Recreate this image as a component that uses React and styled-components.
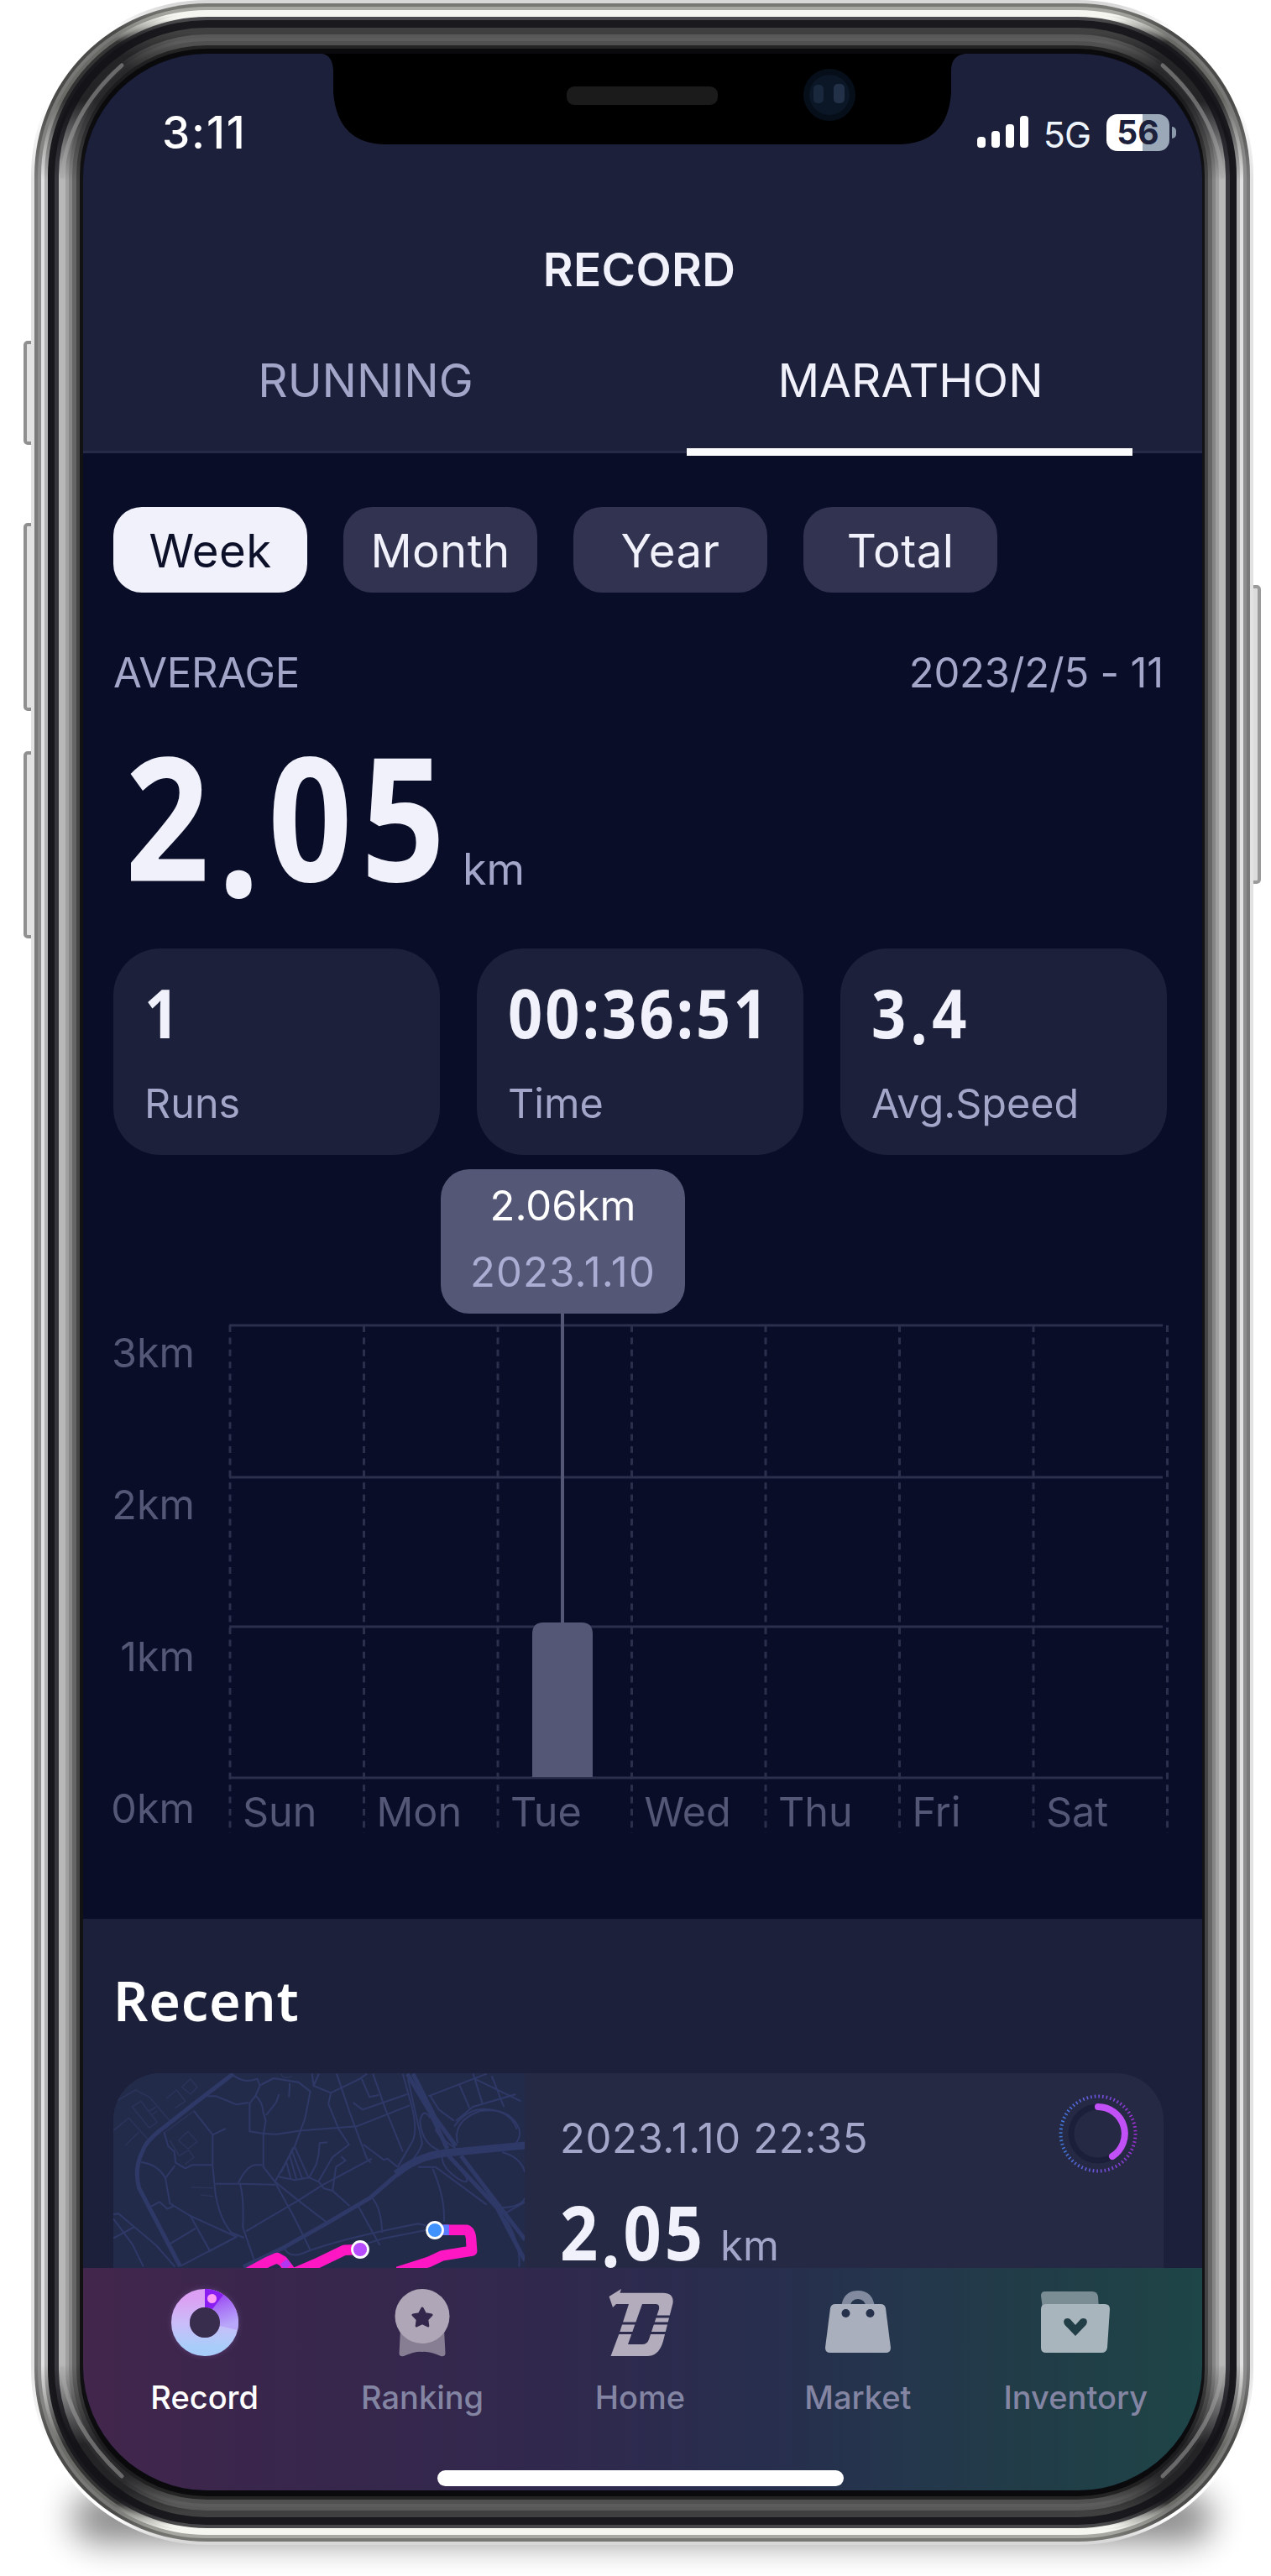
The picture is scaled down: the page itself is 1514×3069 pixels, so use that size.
import React from 'react';
import styled, { createGlobalStyle } from 'styled-components';

const GlobalStyle = createGlobalStyle`
    * { box-sizing: border-box; }
    body {
        margin: 0;
        background: #ffffff;
        font-family: Inter, 'Liberation Sans', sans-serif;
    }
`

const colors = {
    page: '#090d27',
    panel: '#1c203a',
    card: '#262944',
    chip: '#313350',
    light: '#f0f1fb',
    muted: '#a3a6c8',
    dim: '#555777',
    grid: '#2c2f4c',
}

const Stage = styled.div`
    position: relative;
    width: 1514px;
    height: 3069px;
    padding: 64px 0 0 99px;
    overflow: hidden;
`

const FrameSvg = styled.svg`
    position: absolute;
    top: 0;
    left: 0;
`

const Screen = styled.main`
    position: relative;
    display: flex;
    flex-direction: column;
    width: 1333px;
    height: 2903px;
    border-radius: 148px;
    overflow: hidden;
    background: ${colors.page};
`

const NotchSvg = styled.svg`
    position: absolute;
    top: 0;
    left: 285px;
`

/* ---------- header ---------- */

const Header = styled.header`
    height: 476px;
    flex: none;
    background: ${colors.panel};
    border-bottom: 3px solid #262a46;
`

const StatusBar = styled.div`
    display: flex;
    align-items: center;
    justify-content: space-between;
    height: 188px;
    padding: 0 31px 0 94px;
`

const Clock = styled.span`
    font-size: 53px;
    font-weight: 500;
    letter-spacing: 1.8px;
    color: #fff;
`

const StatusIcons = styled.div`
    display: flex;
    align-items: center;
    gap: 19px;
`

const Network = styled.span`
    font-size: 43px;
    line-height: 50px;
    letter-spacing: -1px;
    color: #eef4fb;
    margin: 3px 0 0 -2px;
`

const BatteryWrap = styled.div`
    display: flex;
    align-items: center;
    gap: 3px;
`

const Battery = styled.div`
    width: 75px;
    height: 44px;
    border-radius: 13px;
    background: linear-gradient(to right, #fff 57%, #9aa8b8 57%);
    color: ${colors.panel};
    font-size: 39px;
    font-weight: 700;
    line-height: 44px;
    text-align: center;
`

const BatteryTip = styled.i`
    width: 5px;
    height: 14px;
    border-radius: 0 5px 5px 0;
    background: #8b9aab;
`

const Title = styled.h1`
    margin: 0;
    padding-right: 8px;
    font-size: 55px;
    font-weight: 600;
    line-height: 138px;
    letter-spacing: 0.3px;
    text-align: center;
    color: ${colors.light};
`

const Tabs = styled.nav`
    display: flex;
    padding: 0 23px 0 12px;
`

const Tab = styled.a`
    position: relative;
    flex: 1;
    height: 147px;
    line-height: 126px;
    font-size: 55px;
    text-align: center;
    color: ${props => props.$active ? colors.light : colors.muted};
    &::after {
        content: '';
        display: ${props => props.$active ? 'block' : 'none'};
        position: absolute;
        left: 58px;
        bottom: -6px;
        width: 531px;
        height: 9px;
        background: #fafaff;
    }
`

/* ---------- dashboard ---------- */

const Dashboard = styled.section`
    height: 1746px;
    flex: none;
    padding: 64px 42px 0 36px;
`

const Chips = styled.div`
    display: flex;
    gap: 43px;
`

const Chip = styled.button`
    width: 231px;
    height: 102px;
    padding: 2px 0 0;
    border: 0;
    border-radius: 34px;
    font-family: inherit;
    font-size: 54.5px;
    line-height: 100px;
    letter-spacing: 0.4px;
    background: ${props => props.$active ? colors.light : colors.chip};
    color: ${props => props.$active ? '#0d1029' : colors.light};
`

const Range = styled.div`
    display: flex;
    justify-content: space-between;
    margin-top: 66px;
    padding-right: 4px;
    font-size: 49px;
    line-height: 60px;
    letter-spacing: -0.2px;
    color: ${colors.muted};
`

const Distance = styled.div`
    display: flex;
    align-items: flex-end;
    margin-top: 39px;
    padding-left: 14px;
`

/* condensed numerals; width is the room they take once squeezed */
const Num = styled.strong`
    display: block;
    width: ${props => props.$width ? props.$width + 'px' : 'auto'};
    font-family: 'Noto Sans', sans-serif;
    font-size: ${props => props.$size}px;
    font-weight: 700;
    line-height: ${props => props.$line}px;
    letter-spacing: ${props => props.$track || 0}px;
    white-space: nowrap;
    color: ${colors.light};
    transform: scaleX(${props => props.$squeeze || 0.9});
    transform-origin: 0 50%;
`

/* the decimal point hangs under the baseline */
const Dot = styled.span`
    line-height: 0;
    vertical-align: -0.09em;
`

const Unit = styled.span`
    font-size: ${props => props.$size}px;
    line-height: 60px;
    padding-bottom: ${props => props.$lift || 0}px;
    color: ${colors.muted};
`

const Stats = styled.div`
    display: grid;
    grid-template-columns: repeat(3, 1fr);
    gap: 44px;
    margin-top: 59px;
`

const Stat = styled.div`
    display: flex;
    flex-direction: column;
    height: 246px;
    padding: 34px 0 0 37px;
    border-radius: 56px;
    background: ${colors.panel};
    white-space: nowrap;
`

const StatLabel = styled.span`
    margin-top: 37px;
    font-size: 48.5px;
    line-height: 60px;
    color: ${colors.muted};
`

const ChartBox = styled.div`
    position: relative;
    height: 850px;
`

const ChartSvg = styled.svg`
    display: block;
    overflow: visible;
    text {
        font-size: 48.5px;
        fill: ${colors.dim};
    }
`

const Tooltip = styled.div`
    position: absolute;
    top: 17px;
    left: 390px;
    width: 291px;
    height: 172px;
    padding-top: 14px;
    border-radius: 34px;
    background: ${colors.dim};
    color: #fff;
    font-size: 49px;
    line-height: 60px;
    text-align: center;
    span {
        display: block;
        margin-top: 19px;
        letter-spacing: 1.2px;
        color: #abadd3;
    }
`

/* ---------- recent ---------- */

/* the card runs on underneath the tab bar */
const Recent = styled.section`
    height: 416px;
    flex: none;
    padding: 57px 46px 0 36px;
    background: ${colors.panel};
`

const Heading = styled.h2`
    margin: 0 0 47px;
    font-family: 'Noto Sans', sans-serif;
    font-size: 64.5px;
    font-weight: 600;
    line-height: 80px;
    letter-spacing: 0.8px;
    color: #fff;
`

const RunCard = styled.article`
    display: flex;
    height: 400px;
    border-radius: 56px;
    background: ${colors.card};
`

const MapSvg = styled.svg`
    flex: none;
    border-radius: 56px 0 0 56px;
`

const RunInfo = styled.div`
    flex: 1;
    padding: 48px 0 0 42px;
`

const RunDate = styled.div`
    font-size: 49px;
    line-height: 60px;
    letter-spacing: 0.6px;
    color: ${colors.muted};
`

const RunDistance = styled.div`
    display: flex;
    align-items: baseline;
    margin-top: 35px;
`

const RingSvg = styled.svg`
    margin: 22px 28px 0 0;
`

/* ---------- tab bar ---------- */

const TabBar = styled.footer`
    position: relative;
    display: flex;
    flex-direction: column;
    align-items: center;
    flex: 1;
    padding: 25px 21px 0 15px;
    background: linear-gradient(to right, #43264c 0%, #3a264c 14%, #32284d 38%, #2b2b4e 52%, #26304d 64%, #24374c 74%, #213c47 84%, #1e4547 100%);
`

const TabItems = styled.div`
    display: grid;
    grid-template-columns: repeat(5, 1fr);
    width: 100%;
`

const TabItem = styled.a`
    display: flex;
    flex-direction: column;
    align-items: center;
    font-size: 38px;
    font-weight: 500;
    line-height: 50px;
    color: ${props => props.$active ? '#ffffff' : '#8385a3'};
    svg {
        margin-bottom: 24px;
        overflow: visible;
    }
`

const HomeIndicator = styled.i`
    width: 484px;
    height: 19px;
    margin-top: 62px;
    border-radius: 10px;
    background: #fff;
`

/* each ring: inset from the outer edge, then its colour on the
   top/bottom edge, in the corners and along the sides */
const rings = [
    [-4, '#d8d8d8', '#ffffff', '#e2e2e2'],
    [0, '#777774', '#4a4a48', '#7a7a7a'],
    [4, '#a8a8a2', '#787876', '#8e8e8e'],
    [8, '#f6f6f0', '#6a6a67', '#e2e2e2'],
    [12, '#f6f6f0', '#343434', '#b2b2b2'],
    [16, '#48484a', '#1a1a1e', '#18181c'],
    [20, '#1a1a1e', '#141418', '#18181c'],
    [24, '#1a1a1e', '#141418', '#3a383f'],
    [29, '#404040', '#242427', '#b8b8b8'],
    [37, '#585858', '#2c2c2e', '#a0a0a0'],
    [41, '#5c5c5c', '#2c2c2e', '#868686'],
    [45, '#505050', '#28282a', '#666666'],
    [50, '#242424', '#1c1c1f', '#444444'],
    [54, '#0a0a0c', '#0a0a0c', '#121214'],
]

function PhoneFrame() {
    return (
        <FrameSvg width="1514" height="3069" viewBox="0 0 1514 3069">
            <defs>
                <filter id="soft" x="-20%" y="-100%" width="140%" height="300%">
                    <feGaussianBlur stdDeviation="20" />
                </filter>
                {rings.map(([d, edge, corner, side], i) => (
                    <linearGradient key={i} id={`ring${i}`} gradientUnits="userSpaceOnUse" x1="0" y1="0" x2="0" y2="3032">
                        <stop offset={(10 + d) / 3032} stopColor={edge} />
                        <stop offset={(38 + d) / 3032} stopColor={corner} />
                        <stop offset={120 / 3032} stopColor={corner} />
                        <stop offset={215 / 3032} stopColor={side} />
                        <stop offset={2817 / 3032} stopColor={side} />
                        <stop offset={2912 / 3032} stopColor={corner} />
                        <stop offset={(2994 - d) / 3032} stopColor={corner} />
                        <stop offset={(3022 - d) / 3032} stopColor={edge} />
                    </linearGradient>
                ))}
            </defs>
            <rect x="86" y="2972" width="1358" height="56" rx="28" fill="#000" opacity="0.48" filter="url(#soft)" />
            {[[406, 124], [623, 224], [895, 223]].map(([y, h]) => (
                <rect key={y} x="30" y={y + 2} width="16" height={h - 4} rx="3" fill="#e2e2e2" stroke="#8f8f8f" strokeWidth="4" />
            ))}
            <rect x="1484" y="699" width="16" height="352" rx="3" fill="#dcdcdc" stroke="#9a9a9a" strokeWidth="4" />
            {rings.map(([d], i) => (
                <rect
                    key={i}
                    x={41 + d}
                    y={4 + d}
                    width={1448 - 2 * d}
                    height={3024 - 2 * d}
                    rx={205 - d}
                    fill={`url(#ring${i})`}
                />
            ))}
            {/* corner reflections */}
            <g fill="none" stroke="#a8a8a8" strokeWidth="5" strokeLinecap="round" opacity="0.5">
                <path d="M74 210 Q81 135 145 78" />
                <path d="M1456 210 Q1449 135 1385 78" />
                <path d="M74 2822 Q81 2890 145 2950" />
                <path d="M1456 2822 Q1449 2890 1385 2950" />
            </g>
        </FrameSvg>
    );
}

function Notch() {
    return (
        <NotchSvg width="766" height="110" viewBox="0 0 766 110">
            <path d="M0 0 H766 Q749 2 749 20 V46 Q745 108 685 108 H76 Q18 108 13 46 V20 Q12 2 0 0 Z" fill="#000" />
            <rect x="291" y="39" width="180" height="22" rx="9" fill="#1b1b1b" />
            <circle cx="604" cy="49" r="31" fill="#060e19" />
            <circle cx="604" cy="49" r="24" fill="#0b1727" />
            <rect x="585" y="37" width="12" height="22" rx="5" fill="#1a283d" />
            <rect x="609" y="36" width="13" height="23" rx="5" fill="#223048" />
        </NotchSvg>
    );
}

function Signal() {
    return (
        <svg width="62" height="40" viewBox="0 0 62 40" fill="#fff">
            <rect x="0" y="25" width="10" height="13" rx="4" />
            <rect x="17" y="18" width="10" height="20" rx="4" />
            <rect x="34" y="10" width="10" height="28" rx="4" />
            <rect x="51" y="0" width="10" height="38" rx="4" />
        </svg>
    );
}

const days = ['Sun', 'Mon', 'Tue', 'Wed', 'Thu', 'Fri', 'Sat'];
const levels = ['3km', '2km', '1km', '0km'];
const lineY = [203, 384, 562, 742];

function Chart() {
    const step = 159.5;
    return (
        <ChartBox>
            <ChartSvg width="1255" height="850" viewBox="0 0 1255 850">
                {levels.map((label, i) => (
                    <g key={label}>
                        <line x1="138" x2="1250" y1={lineY[i]} y2={lineY[i]} stroke={colors.grid} strokeWidth="3" />
                        <text x="97" y={253 + i * 181} textAnchor="end">{label}</text>
                    </g>
                ))}
                {[...days, ''].map((day, i) => (
                    <g key={i}>
                        <line
                            x1={139 + i * step}
                            x2={139 + i * step}
                            y1="203"
                            y2="808"
                            stroke={colors.grid}
                            strokeWidth="3"
                            strokeDasharray="8 6.4"
                        />
                        <text x={154 + i * step} y="800">{day}</text>
                    </g>
                ))}
                <rect x="533" y="185" width="4" height="374" fill={colors.dim} />
                <path d="M499 741 V571 Q499 557 512 557 H558 Q571 557 571 571 V741 Z" fill={colors.dim} />
            </ChartSvg>
            <Tooltip>
                2.06km
                <span>2023.1.10</span>
            </Tooltip>
        </ChartBox>
    );
}

const minorRoads = [
    'M455 632 Q490 670 530 650 L538 675 L525 710 L508 738 V838 L545 845 L585 848 L660 835 L820 820 L975 745',
    'M385 712 L410 712 L470 742 L505 735',
    'M525 710 Q545 730 548 770 L555 800 L548 850 V965 L582 1018 L650 1085 L735 1165',
    'M540 672 L578 648 L650 662 L685 695 L670 790 L640 890 L582 1018',
    'M625 665 L623 715 M594 705 L585 735 L556 780',
    'M690 632 L695 675 L745 700 L830 650 L850 632 M695 675 L710 632',
    'M745 700 L738 740 L768 830 L798 885 L750 930 L710 1015',
    'M762 632 L800 770 L850 935 L862 950',
    'M835 650 L858 715 L885 708 M868 632 L905 760 L955 910',
    'M810 735 L838 760 L968 705',
    'M955 632 L975 720 Q1000 820 985 870 L940 965',
    'M970 650 L990 760 L1012 880 Q1000 930 945 985',
    'M635 895 L600 985 M640 895 L680 1003 M632 910 L662 1008 M625 925 L645 1010 M615 945 L628 1008',
    'M592 1000 L640 1012 L682 1003 L710 1018 L725 1042 L750 1050 L800 1105',
    'M735 877 L712 880 L710 915 L703 955 L682 1003',
    'M775 928 L788 942 L760 965 L750 1050',
    'M840 885 L900 940 L910 935 L940 965',
    'M865 935 L720 1030 L650 1085 L497 1195',
    'M408 1025 L480 1025 L582 1028 M475 1022 Q500 960 525 958 L545 958',
    'M480 1025 Q492 1080 488 1180 L522 1300',
    'M400 850 V960 L408 1060 Q420 1150 455 1200 L492 1218 M438 828 L400 850 L345 765',
    'M582 1020 L640 1150 L685 1262 M825 1105 L888 1245 M865 1075 Q892 1110 895 1200',
    'M258 840 L270 890 L288 910 L292 950 L320 970 L340 958 H400 M290 960 L262 1005 L275 1095 L335 1140 L470 1215 L388 1268',
    'M190 948 Q240 955 262 1005 M215 1110 L245 1090 L268 1115 L285 1105',
    'M335 1140 L392 1265 M275 1240 L350 1185 M305 1320 L470 1215',
    'M110 1135 L125 1132 L235 1245 L290 1322 M110 1150 L165 1240 L198 1322 M110 1220 L170 1180',
    'M610 1258 Q625 1290 660 1275 Q760 1225 1000 1168 L1025 1175 M740 1280 L900 1220 L1025 1190',
    'M1030 712 L1200 632 M1120 670 L1150 755 M1165 650 L1188 740 M1215 640 L1250 750 M1165 650 L1300 730 M1110 800 L1160 750 L1285 705',
    'M1035 710 L1060 760 L1105 800 M1160 632 L1168 660',
    'M1115 880 Q1100 800 1180 765 Q1270 750 1295 830 Q1300 860 1285 880',
    'M1105 820 Q1140 760 1190 758 Q1270 760 1288 830',
    'M1005 800 Q1015 750 1035 790 M1005 800 Q1010 880 1060 905 M1050 830 Q1060 860 1110 900',
    'M1070 930 Q1070 970 1120 1010 Q1150 1030 1140 1000 L1100 940',
    'M1000 965 L1050 965 Q1090 1000 1200 1100 M1042 970 Q1080 1080 1075 1160',
    'M1245 912 Q1300 930 1312 985 M1240 1110 Q1300 1110 1312 1075 M1255 1130 L1312 1090',
    'M1255 1150 Q1300 1240 1295 1322',
];

const faintRoads = [
    'M110 735 L175 690 L215 715 L275 800 M165 750 L215 825 L238 805 L190 730 Z M215 765 L235 750 M220 780 L238 765',
    'M265 720 L295 690 L320 730 L290 755 M310 680 L335 650 L355 680 L335 705 Z M110 835 L155 790 L210 865 M185 840 L145 888',
    'M262 840 L345 765 M300 870 L328 838 L355 875 L328 900 Z M275 870 L302 925 L330 905 L345 930 L320 955 M135 680 L110 735',
    'M338 1038 L402 1040 M365 1065 L402 1070 M600 632 Q605 655 632 640',
];

function RouteMap() {
    return (
        <MapSvg width="490" height="400" viewBox="0 0 490 400">
            <rect width="490" height="400" fill="#232b4b" />
            <g transform="scale(0.408 0.3333) translate(-110 -630)" fill="none" stroke="#2f3967" strokeLinejoin="round">
                {faintRoads.map((d, i) => <path key={i} d={d} strokeWidth="1.5" vectorEffect="non-scaling-stroke" stroke="#2b3459" />)}
                {minorRoads.map((d, i) => <path key={i} d={d} strokeWidth="2" vectorEffect="non-scaling-stroke" />)}
                <path d="M460 632 L340 745 L262 820 Q205 870 195 910 Q170 970 185 1040 L215 1110 L305 1320" strokeWidth="5" vectorEffect="non-scaling-stroke" />
                <path d="M490 1322 L600 1258 L735 1165 L860 1075 L945 985" strokeWidth="5" vectorEffect="non-scaling-stroke" />
                <path d="M935 990 Q1000 925 1080 915 L1312 888" strokeWidth="9" vectorEffect="non-scaling-stroke" />
                <path d="M968 632 L1035 770 L1085 900 M985 632 L1050 790 L1110 890 M1125 925 L1240 1110 L1312 1225 M1085 920 L1230 1110 L1290 1250 L1312 1300" strokeWidth="5" vectorEffect="non-scaling-stroke" />
                <g stroke="#ff17c4" strokeWidth="12.5">
                    <path d="M500 1345 L560 1305 L588 1290 L605 1302 L635 1350" vectorEffect="non-scaling-stroke" />
                    <path d="M640 1343 L700 1312 L785 1262 L830 1260" vectorEffect="non-scaling-stroke" />
                    <path d="M1075 1190 L1140 1190 Q1155 1195 1155 1235 L1157 1265 L1070 1282 L1030 1305 L940 1340" vectorEffect="non-scaling-stroke" />
                </g>
                <path d="M1065 1190 H1090" stroke="#5a7dff" strokeWidth="12.5" vectorEffect="non-scaling-stroke" />
                <path d="M607 1303 L620 1323" stroke="#b436f0" strokeWidth="10" vectorEffect="non-scaling-stroke" />
            </g>
            <circle cx="383" cy="187" r="9.5" fill="#3f92ff" stroke="#fff" strokeWidth="2.8" />
            <circle cx="294" cy="210" r="9.5" fill="#b74dff" stroke="#fff" strokeWidth="2.8" />
        </MapSvg>
    );
}

function ProgressRing() {
    return (
        <RingSvg width="100" height="100" viewBox="0 0 100 100" fill="none">
            <defs>
                <linearGradient id="ticks" x1="0" x2="1">
                    <stop offset="0" stopColor="#3e78d8" />
                    <stop offset="0.45" stopColor="#6a55e0" />
                    <stop offset="1" stopColor="#9a2fd0" />
                </linearGradient>
            </defs>
            <circle cx="50" cy="50" r="44.5" stroke="url(#ticks)" strokeWidth="4" strokeDasharray="1.6 3.06" />
            <circle cx="50" cy="50" r="32" stroke="#1c1f39" strokeWidth="7" />
            <path d="M50 18 A32 32 0 0 1 67 77" stroke="#c250f7" strokeWidth="8" strokeLinecap="round" />
        </RingSvg>
    );
}

function RecordIcon() {
    return (
        <svg width="80" height="80" viewBox="0 0 80 80" fill="none">
            <defs>
                <linearGradient id="donut" x1="0" y1="0" x2="0" y2="1">
                    <stop offset="0" stopColor="#dba0f3" />
                    <stop offset="0.5" stopColor="#cbbcf8" />
                    <stop offset="1" stopColor="#a9cdfa" />
                </linearGradient>
                <linearGradient id="wedge" x1="0" y1="0" x2="0.3" y2="1">
                    <stop offset="0" stopColor="#8a1ff0" />
                    <stop offset="0.5" stopColor="#a66cf5" />
                    <stop offset="1" stopColor="#b9a8fa" />
                </linearGradient>
                <filter id="halo" x="-30%" y="-30%" width="160%" height="160%">
                    <feGaussianBlur stdDeviation="5" />
                </filter>
            </defs>
            <circle cx="40" cy="40" r="37" fill="#a97be0" opacity="0.6" filter="url(#halo)" />
            <circle cx="40" cy="40" r="29" stroke="url(#donut)" strokeWidth="22" />
            <path d="M40 0 A40 40 0 0 1 79 49 L57.5 44 A18 18 0 0 0 40 22 Z" fill="url(#wedge)" />
            <path d="M40 0 A40 40 0 0 1 62 7 L49 24 A18 18 0 0 0 40 22 Z" fill="#8a1df2" />
            <circle cx="40" cy="40" r="18" fill="#382d4c" />
            <circle cx="48.5" cy="11.5" r="5.5" fill="#ff9df5" />
        </svg>
    );
}

function RankingIcon() {
    return (
        <svg width="80" height="80" viewBox="0 0 80 80">
            <path d="M14 48 H66 L67.5 77 Q67 81 62 80 Q48 74 40 75 Q32 74 18 80 Q13 81 12.5 77 Z" fill="#877e94" />
            <circle cx="40" cy="32.5" r="32.5" fill="#afa7b7" />
            <path d="M40 23 L43.6 29.6 L51 31 L45.8 36.4 L46.8 44 L40 40.7 L33.2 44 L34.2 36.4 L29 31 L36.4 29.6 Z" fill="#33284c" stroke="#33284c" strokeWidth="3" strokeLinejoin="round" />
        </svg>
    );
}

function HomeIcon() {
    return (
        <svg width="80" height="80" viewBox="0 0 80 80">
            <mask id="stripes">
                <rect width="82" height="82" fill="#fff" />
                <path d="M14 41 H36 M11 52.5 H34 M56 33 H80 M54 41 H78 M50 52.5 H76" stroke="#000" strokeWidth="3" />
            </mask>
            <path
                mask="url(#stripes)"
                fillRule="evenodd"
                fill="#b3acbd"
                d="M3.5 9 L18 0 L16.5 4.7 H68 Q81 5 79.5 17 L68 62 Q63 80 49 80 H5.5 L16 52 L27 18 H12 L8 22 Z M43 18 L26 66 H43 Q49 66 51 60 L63 24 Q64 18 59 18 Z"
            />
        </svg>
    );
}

function MarketIcon() {
    return (
        <svg width="80" height="80" viewBox="0 0 80 80">
            <path d="M25 22 Q27 7 40 7 Q53 7 55 22" fill="none" stroke="#818a9f" strokeWidth="10" />
            <path d="M13 18 H67 Q72 18 73 23 L79 70 Q79 76 73 76 H7 Q1 76 1 70 L7 23 Q8 18 13 18 Z" fill="#a9afbd" />
            <circle cx="25.5" cy="29" r="5" fill="#25304b" />
            <circle cx="54.5" cy="29" r="5" fill="#25304b" />
        </svg>
    );
}

function InventoryIcon() {
    return (
        <svg width="84" height="80" viewBox="0 0 84 80">
            <path d="M1 8 Q1 3 6 3 H62 Q68 3 69 9 L70 24 H3 Z" fill="#7a8c94" />
            <path d="M7 18 H77 Q83 18 83 24 L80 70 Q79 76 73 76 H7 Q1 76 1 70 V24 Q1 18 7 18 Z" fill="#a9b5bd" />
            <path d="M42 56 L29.5 43 Q26.5 38 30 35.5 Q35 33.5 37.5 38 L42 43 L46.5 38 Q49 33.5 54 35.5 Q57.5 38 54.5 43 Z" fill="#213d46" />
        </svg>
    );
}

const menu = [
    { label: 'Record', Icon: RecordIcon },
    { label: 'Ranking', Icon: RankingIcon },
    { label: 'Home', Icon: HomeIcon },
    { label: 'Market', Icon: MarketIcon },
    { label: 'Inventory', Icon: InventoryIcon },
];

function App() {
    return (
        <Stage>
            <GlobalStyle />
            <PhoneFrame />
            <Screen>
                <Header>
                    <StatusBar>
                        <Clock>3:11</Clock>
                        <StatusIcons>
                            <Signal />
                            <Network>5G</Network>
                            <BatteryWrap>
                                <Battery>56</Battery>
                                <BatteryTip />
                            </BatteryWrap>
                        </StatusIcons>
                    </StatusBar>
                    <Title>RECORD</Title>
                    <Tabs>
                        <Tab>RUNNING</Tab>
                        <Tab $active>MARATHON</Tab>
                    </Tabs>
                </Header>

                <Dashboard>
                    <Chips>
                        {['Week', 'Month', 'Year', 'Total'].map(name => (
                            <Chip key={name} $active={name === 'Week'}>{name}</Chip>
                        ))}
                    </Chips>
                    <Range>
                        <span>AVERAGE</span>
                        <span>2023/2/5 - 11</span>
                    </Range>
                    <Distance>
                        <Num $size={204} $line={200} $squeeze={0.86} $track={12} $width={402}>2<Dot>.</Dot>05</Num>
                        <Unit $size={52} $lift={5}>km</Unit>
                    </Distance>
                    <Stats>
                        <Stat>
                            <Num $size={80} $line={84}>1</Num>
                            <StatLabel>Runs</StatLabel>
                        </Stat>
                        <Stat>
                            <Num $size={80} $line={84} $track={3.5}>00:36:51</Num>
                            <StatLabel>Time</StatLabel>
                        </Stat>
                        <Stat>
                            <Num $size={80} $line={84} $track={6}>3<Dot>.</Dot>4</Num>
                            <StatLabel>Avg.Speed</StatLabel>
                        </Stat>
                    </Stats>
                    <Chart />
                </Dashboard>

                <Recent>
                    <Heading>Recent</Heading>
                    <RunCard>
                        <RouteMap />
                        <RunInfo>
                            <RunDate>2023.1.10 22:35</RunDate>
                            <RunDistance>
                                <Num $size={90} $line={90} $squeeze={0.88} $track={4.5} $width={191}>2<Dot>.</Dot>05</Num>
                                <Unit $size={49}>km</Unit>
                            </RunDistance>
                        </RunInfo>
                        <ProgressRing />
                    </RunCard>
                </Recent>

                <TabBar>
                    <TabItems>
                        {menu.map(({ label, Icon }) => (
                            <TabItem key={label} $active={label === 'Record'}>
                                <Icon />
                                {label}
                            </TabItem>
                        ))}
                    </TabItems>
                    <HomeIndicator />
                </TabBar>
                <Notch />
            </Screen>
        </Stage>
    );
}

export default App;
